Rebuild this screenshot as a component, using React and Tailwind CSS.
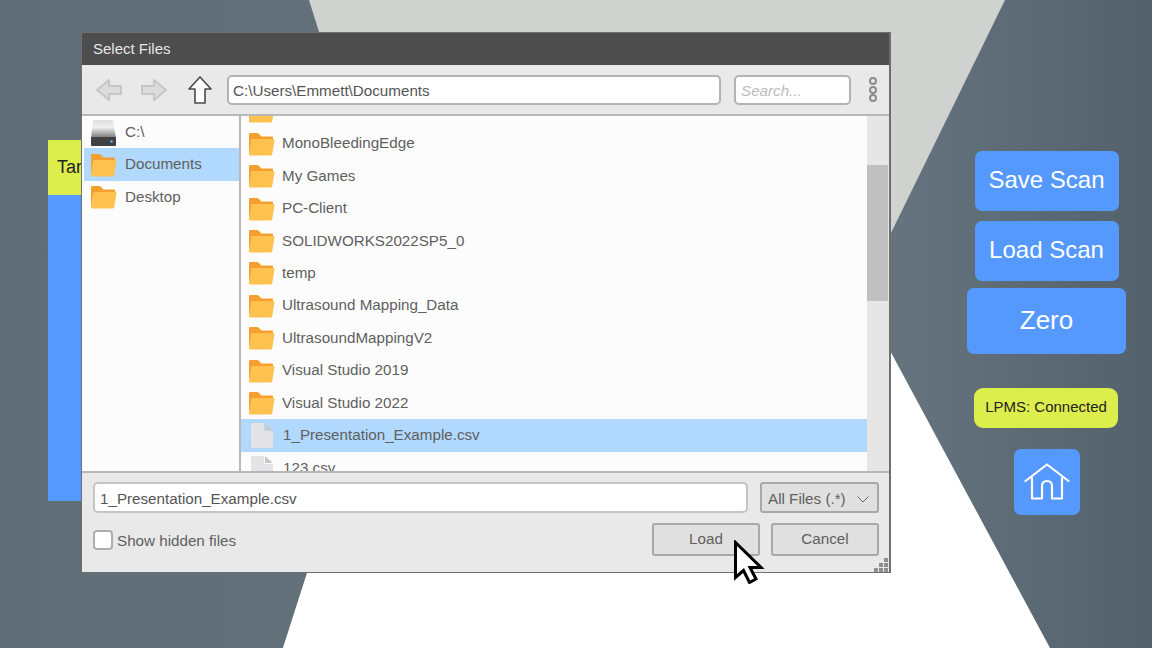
const folders = [
  '',
  'MonoBleedingEdge',
  'My Games',
  'PC-Client',
  'SOLIDWORKS2022SP5_0',
  'temp',
  'Ultrasound Mapping_Data',
  'UltrasoundMappingV2',
  'Visual Studio 2019',
  'Visual Studio 2022',
];

function FolderIcon() {
  return (
    <svg width="27" height="24" viewBox="0 0 27 24" className="shrink-0">
      <path d="M1 23V2q0-1 1-1h7q1 0 2 1l2.500 2.500H24q1 0 1 1V8H4z" fill="#f5a02e" />
      <path d="M1 22.500 3.200 8q.2-1 1.200-1H25.500q1.200 0 1 1.200l-2.300 14q-.2 1.300-1.400 1.300H2q-1 0-1-1z" fill="#ffc251" />
    </svg>
  );
}

function FileIcon() {
  return (
    <svg width="24" height="27" viewBox="0 0 24 27" className="shrink-0">
      <path d="M1 2q0-1 1-1h12v8h9v16q0 1-1 1H2q-1 0-1-1z" fill="#e4e4e6" />
      <path d="M15 1l8 7h-8z" fill="#c9c9cc" />
    </svg>
  );
}

function DriveIcon() {
  return (
    <svg width="27" height="27" viewBox="0 0 27 27" className="shrink-0">
      <defs>
        <linearGradient id="driveBody" x1="0" y1="0" x2="0" y2="1">
          <stop offset="0" stopColor="#dcdcdc" />
          <stop offset="0.4" stopColor="#f0f0f0" />
          <stop offset="1" stopColor="#777777" />
        </linearGradient>
      </defs>
      <path d="M3 2q.3-1 1.500-1h17q1.200 0 1.500 1l3 17H1z" fill="url(#driveBody)" />
      <path d="M1 18h25v8q0 1-1 1H2q-1 0-1-1z" fill="#3f4145" />
      <circle cx="21.500" cy="22.500" r="1.300" fill="#6db7ee" />
    </svg>
  );
}

function NavArrow({ flip, stroke, fill }) {
  return (
    <svg width="28" height="24" viewBox="0 0 28 24" className={flip ? '-scale-x-100' : ''}>
      <path d="M14 2 2 12l12 10v-6h12V8H14z" fill={fill} stroke={stroke} strokeWidth="2" strokeLinejoin="round" />
    </svg>
  );
}

function Row({ children, label, selected, className = 'pl-[7px] gap-[7px]' }) {
  return (
    <div className={`flex items-center h-[32.45px] text-[15.200px] text-[#5f5f5f] ${className} ${selected ? 'bg-[#b1d8fd]' : ''}`}>
      {children}
      <span className="whitespace-nowrap">{label}</span>
    </div>
  );
}

function SideButton({ children, className }) {
  return (
    <div className={`flex items-center justify-center bg-[#5599fe] rounded-[7px] text-white ${className}`}>
      {children}
    </div>
  );
}

function FileDialog() {
  return (
    <div className="absolute left-[81px] top-[32px] w-[810px] h-[541px] flex flex-col bg-[#e9e9e9] border border-[#6f6f6f] border-r-2 text-[#5f5f5f]">
      <div className="h-[32px] shrink-0 flex items-center pl-[11px] pt-px bg-[#4d4d4d] text-[#e6e6e6] text-[15px]">Select Files</div>
      <div className="h-[51px] shrink-0 flex items-center border-b-2 border-[#b8b8b8]">
        <div className="ml-[13px]"><NavArrow stroke="#c6c6c6" fill="#dcdcdc" /></div>
        <div className="ml-[17px]"><NavArrow flip stroke="#c6c6c6" fill="#dcdcdc" /></div>
        <svg width="26" height="30" viewBox="0 0 26 30" className="ml-[19px]">
          <path d="M13 2 2 14h6v14h10V14h6z" fill="#fff" stroke="#4a4a4a" strokeWidth="1.600" strokeLinejoin="round" />
        </svg>
        <div className="ml-[14px] w-[494px] h-[30px] flex items-center px-[4px] pt-[3px] bg-white border-2 border-[#b3b3b3] rounded-[5px] text-[15.200px] text-[#555555]">C:\Users\Emmett\Documents</div>
        <div className="ml-[13px] w-[117px] h-[30px] flex items-center px-[5px] pt-[3px] bg-white border-2 border-[#b3b3b3] rounded-[5px] text-[15.200px] italic text-[#bdbdbd]">Search...</div>
        <div className="ml-[18px] flex flex-col gap-[0.5px]">
          <span className="w-[8px] h-[8px] rounded-full border-2 border-[#8c8c8c]" />
          <span className="w-[8px] h-[8px] rounded-full border-2 border-[#8c8c8c]" />
          <span className="w-[8px] h-[8px] rounded-full border-2 border-[#8c8c8c]" />
        </div>
      </div>
      <div className="h-[357px] shrink-0 flex bg-[#fcfcfc] border-b-2 border-[#b8b8b8]">
        <div className="w-[159px] shrink-0 pl-[2px] border-r-2 border-[#b8b8b8]">
          <Row label="C:\" className="pl-[6px] gap-[8px]"><DriveIcon /></Row>
          <Row label="Documents" selected className="pl-[6px] gap-[8px]"><FolderIcon /></Row>
          <Row label="Desktop" className="pl-[6px] gap-[8px]"><FolderIcon /></Row>
        </div>
        <div className="flex-1 overflow-hidden">
          <div className="-mt-[21px]">
            {folders.map((name) => (
              <Row key={name} label={name}><FolderIcon /></Row>
            ))}
            <Row label="1_Presentation_Example.csv" selected className="pl-[9px] gap-[9px]"><FileIcon /></Row>
            <Row label="123.csv" className="pl-[9px] gap-[9px]"><FileIcon /></Row>
          </div>
        </div>
        <div className="w-[22px] shrink-0 pr-px bg-[#e6e6e6] pt-[49px]">
          <div className="h-[136px] bg-[#c0c0c0]" />
        </div>
      </div>
      <div className="flex-1 relative pl-[11px] pr-[10px] pt-[9px]">
        <div className="flex gap-[12px]">
          <div className="w-[655px] h-[31px] flex items-center px-[5px] pt-[3px] bg-white border-2 border-[#c4c4c4] rounded-[5px] text-[15.200px] text-[#555555]">1_Presentation_Example.csv</div>
          <div className="w-[119px] h-[31px] flex items-center justify-between pl-[6px] pr-[8px] pt-[3px] bg-[#e0e0e0] border-2 border-[#a8a8a8] rounded-[3px] text-[15.200px]">
            All Files (.*)
            <svg width="12" height="7" viewBox="0 0 12 7"><path d="M.5.500 6 6 11.500.500" fill="none" stroke="#666" strokeWidth="1" /></svg>
          </div>
        </div>
        <div className="flex items-center mt-[10px]">
          <div className="w-[20px] h-[20px] mt-px bg-white border-2 border-[#adadad] rounded-[4px]" />
          <span className="ml-[4px] mt-[3px] text-[15.200px]">Show hidden files</span>
          <div className="ml-auto w-[108px] h-[33px] flex items-center justify-center bg-[#e0e0e0] border-2 border-[#a8a8a8] rounded-[3px] text-[15.200px]">Load</div>
          <div className="ml-[11px] w-[108px] h-[33px] flex items-center justify-center bg-[#e0e0e0] border-2 border-[#a8a8a8] rounded-[3px] text-[15.200px]">Cancel</div>
        </div>
        <svg width="16" height="14" viewBox="0 0 16 14" className="absolute right-0 bottom-0">
          <path d="M11 0h4v4h-4zM6 5h4v4H6zM11 5h4v4h-4zM1 10h4v4H1zM6 10h4v4H6zM11 10h4v4h-4z" fill="#8f8f8f" />
        </svg>
      </div>
    </div>
  );
}

export default function App() {
  return (
    <div className="relative w-[1152px] h-[648px] overflow-hidden flex bg-gradient-to-r from-[#5f6d76] via-[#67767f] via-75% to-[#53616d] font-['Liberation_Sans',Arial,sans-serif]">
      <svg width="1152" height="648" viewBox="0 0 1152 648" className="absolute inset-0">
        <path d="M309 0H1005L688 648H283L400 290z" fill="#d0d2cf" />
        <path d="M283 648 383 335 880 332 1050 648z" fill="#ffffff" />
      </svg>

      <div className="relative mt-[140px] ml-[48px] w-[120px] h-[361px] flex flex-col bg-[#5599fe]">
        <div className="h-[55px] flex items-center pl-[9px] bg-[#dcee4c] text-[18px] text-[#222222]">Target</div>
      </div>

      <div className="relative ml-auto mr-[26px] w-[159px] pt-[151px] flex flex-col items-center text-white">
        <SideButton className="w-[144px] h-[60px] pb-[2px] text-[24px]">Save Scan</SideButton>
        <SideButton className="w-[144px] h-[60px] mt-[10px] pb-[2px] text-[24px]">Load Scan</SideButton>
        <SideButton className="w-[159px] h-[66px] mt-[7px] pb-[2px] text-[26px]">Zero</SideButton>
        <div className="self-start ml-[7px] w-[144px] h-[40px] mt-[34px] pb-[2px] flex items-center justify-center rounded-[9px] bg-[#dcee4c] text-[15px] text-[#222222]">LPMS: Connected</div>
        <SideButton className="w-[66px] h-[66px] mt-[21px]">
          <svg width="46" height="38" viewBox="0 0 46 38" fill="none" stroke="#fff" strokeWidth="2.200" strokeLinecap="round" strokeLinejoin="round">
            <path d="M1.500 18 23 1.500 44.500 18" />
            <path d="M8 15v20.500h10V23q0-5 5-5t5 5v12.500h10V15" />
          </svg>
        </SideButton>
      </div>

      <FileDialog />

      <svg width="32" height="44" viewBox="0 0 32 44" className="absolute left-[733px] top-[540px]">
        <path d="M2.500 2.500v35l8-7 6 12 6.500-3.500-6-11.500h11z" fill="#fff" stroke="#000" strokeWidth="3" strokeLinejoin="miter" />
      </svg>
    </div>
  );
}
